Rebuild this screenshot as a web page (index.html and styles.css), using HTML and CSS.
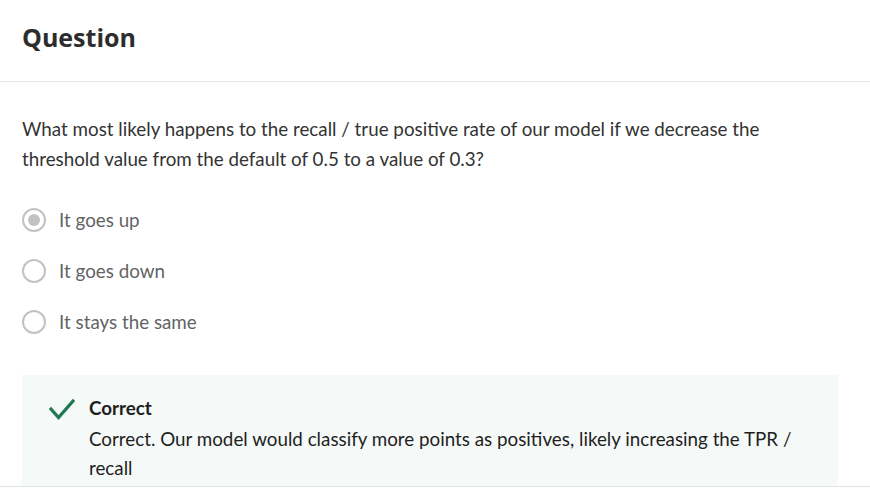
FILE: index.html
```html
<!DOCTYPE html>
<html lang="en">
<head>
<meta charset="utf-8">
<title>Question</title>
<link rel="stylesheet" href="styles.css">
</head>
<body>
<div class="page">
  <header class="head">
    <h1 class="title">Question</h1>
  </header>
  <main class="body">
    <p class="prompt">What most likely happens to the recall / true positive rate of our model if we decrease the threshold value from the default of 0.5 to a value of 0.3?</p>
    <div class="options">
      <label class="option">
        <span class="radio checked"></span>
        <span class="opt-text">It goes up</span>
      </label>
      <label class="option">
        <span class="radio"></span>
        <span class="opt-text">It goes down</span>
      </label>
      <label class="option">
        <span class="radio"></span>
        <span class="opt-text">It stays the same</span>
      </label>
    </div>
    <div class="feedback">
      <svg class="check" width="26" height="22" viewBox="0 0 26 22" aria-hidden="true">
        <path d="M2 10 L9.5 18.5 L24 2" fill="none" stroke="#1f7a52" stroke-width="3.2" stroke-linecap="square" stroke-linejoin="miter"/>
      </svg>
      <div class="fb-text">
        <div class="fb-title">Correct</div>
        <div class="fb-msg">Correct. Our model would classify more points as positives, likely increasing the TPR / recall</div>
      </div>
    </div>
  </main>
</div>
</body>
</html>
```
FILE: styles.css
```css
html, body {
  margin: 0;
  padding: 0;
  background: #ffffff;
}
.page {
  width: 870px;
  height: 487px;
  overflow: hidden;
  border-bottom: 1px solid #e3e3e3;
  box-sizing: border-box;
  font-family: "Lato", "Open Sans", sans-serif;
}
.head {
  height: 82px;
  border-bottom: 1px solid #e5e5e5;
  box-sizing: border-box;
  padding: 19px 22px 0;
}
.title {
  margin: 0;
  font-family: "Open Sans", sans-serif;
  font-weight: 700;
  font-size: 25px;
  line-height: 36px;
  color: #2d2d2d;
}
.body {
  padding: 32px 32px 0 22px;
}
.prompt {
  margin: 0;
  width: 816px;
  font-size: 18.8px;
  line-height: 30px;
  color: #333333;
}
.options {
  display: flex;
  flex-direction: column;
  margin-top: 20px;
}
.option {
  display: flex;
  align-items: center;
  height: 51px;
  gap: 13px;
}
.radio {
  width: 20px;
  height: 20px;
  border: 2.5px solid #c2c2c2;
  border-radius: 50%;
  display: flex;
  align-items: center;
  justify-content: center;
  flex: none;
}
.radio.checked::after {
  content: "";
  width: 12px;
  height: 12px;
  border-radius: 50%;
  background: #c2c2c2;
}
.opt-text {
  font-size: 18.8px;
  color: #636363;
}
.feedback {
  margin-top: 28px;
  width: 816px;
  background: #f5f9f8;
  display: flex;
  gap: 14px;
  padding: 21px 22px 20px 27px;
  box-sizing: border-box;
}
.check {
  flex: none;
  margin-top: 3px;
}
.fb-title {
  font-weight: 700;
  font-size: 18.8px;
  line-height: 24px;
  color: #1f1f1f;
}
.fb-msg {
  font-size: 18.8px;
  line-height: 29px;
  color: #1f1f1f;
  margin-top: 4px;
}
```
